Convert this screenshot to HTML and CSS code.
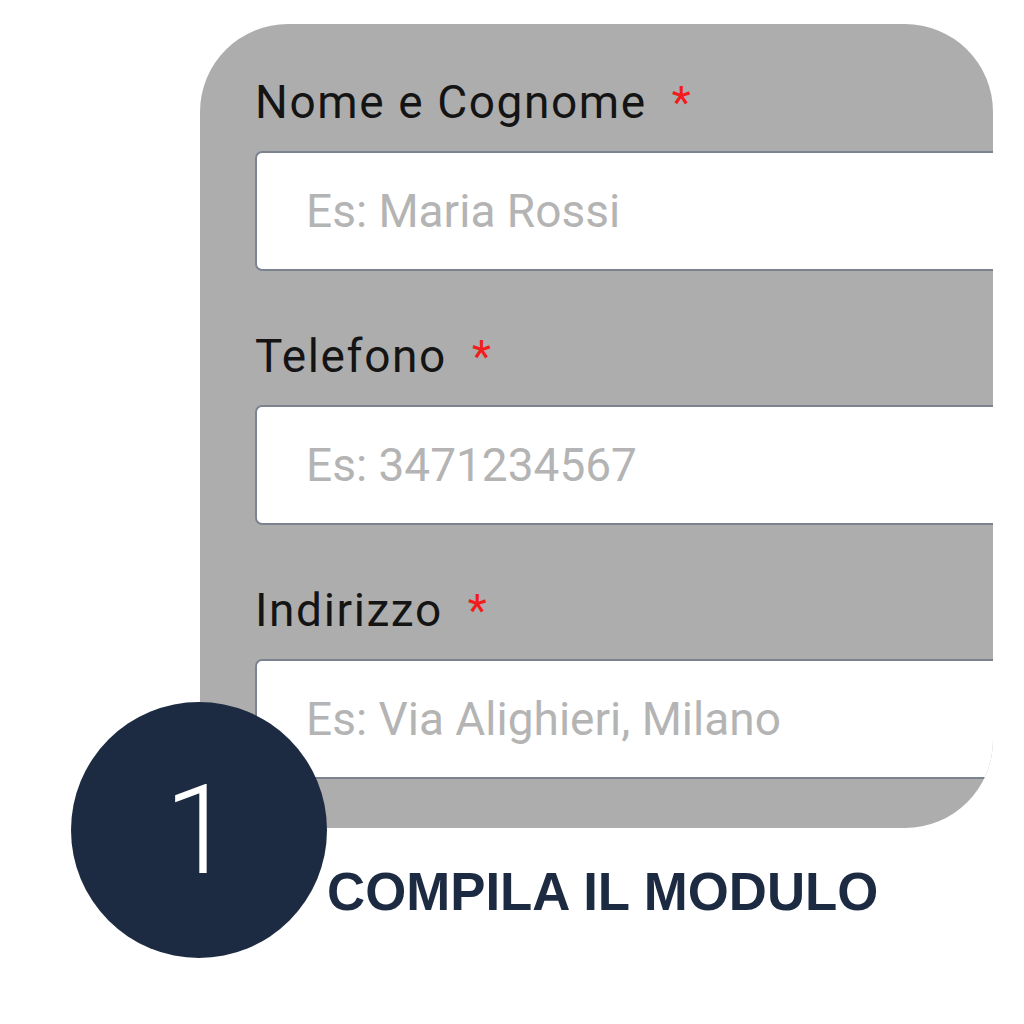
FILE: index.html
```html
<!DOCTYPE html>
<html lang="it">
<head>
<meta charset="utf-8">
<link rel="stylesheet" href="styles.css">
</head>
<body>
<div class="page">
  <form class="panel">
    <div class="field">
      <label class="label">Nome e Cognome <span class="req">*</span></label>
      <input class="input" type="text" placeholder="Es: Maria Rossi">
    </div>
    <div class="field">
      <label class="label">Telefono <span class="req">*</span></label>
      <input class="input" type="text" placeholder="Es: 3471234567">
    </div>
    <div class="field">
      <label class="label">Indirizzo <span class="req">*</span></label>
      <input class="input" type="text" placeholder="Es: Via Alighieri, Milano">
    </div>
  </form>
  <div class="step-badge">1</div>
  <h2 class="step-title">COMPILA IL MODULO</h2>
</div>
</body>
</html>
```

FILE: styles.css
```css
html, body {
  margin: 0;
  padding: 0;
  background: #ffffff;
}

.page {
  position: relative;
  width: 1024px;
  height: 1024px;
  padding-top: 24px;
  box-sizing: border-box;
}

.panel {
  margin: 0 0 0 200px;
  width: 793px;
  height: 804px;
  box-sizing: border-box;
  padding: 48px 0 0 55px;
  background: #adadad;
  border-radius: 88px;
  overflow: hidden;
}

.field {
  display: flex;
  flex-direction: column;
  gap: 19px;
  margin-bottom: 55px;
}

.label {
  font-family: Roboto, "Liberation Sans", sans-serif;
  font-size: 46px;
  letter-spacing: 1.6px;
  line-height: 60px;
  height: 60px;
  color: #141414;
  white-space: nowrap;
}

.req {
  color: #f21c1c;
  margin-left: 12px;
  font-size: 44px;
}

.input {
  display: block;
  width: 800px;
  height: 120px;
  box-sizing: border-box;
  margin: 0;
  padding: 0 0 0 49px;
  border: 2px solid #7b8391;
  border-radius: 7px;
  background: #ffffff;
  font-family: Roboto, "Liberation Sans", sans-serif;
  font-size: 46px;
  color: #333;
  outline: none;
}

.input::placeholder {
  color: #b4b4b4;
  opacity: 1;
}

.step-badge {
  position: absolute;
  left: 71px;
  top: 702px;
  width: 256px;
  height: 256px;
  border-radius: 50%;
  background: #1c2b42;
  color: #ffffff;
  font-family: Roboto, "Open Sans", sans-serif;
  font-weight: 300;
  font-size: 125px;
  display: flex;
  align-items: center;
  justify-content: center;
}

.step-title {
  margin: 35px 0 0 327px;
  font-family: "Liberation Sans", Arial, sans-serif;
  font-weight: 700;
  font-size: 52.8px;
  line-height: 58px;
  color: #1c2b42;
  white-space: nowrap;
}
```
